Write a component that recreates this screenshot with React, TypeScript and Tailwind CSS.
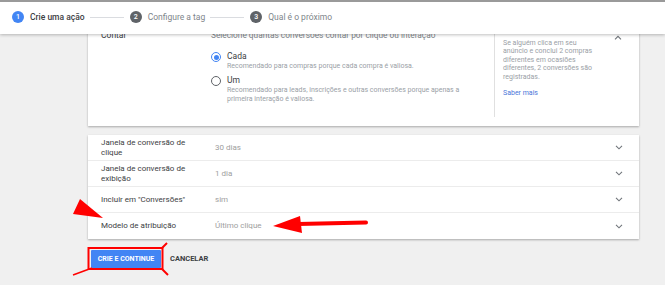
const Chevron = ({ up = false }: { up?: boolean }) => (
  <svg width="8" height="5" viewBox="0 0 8 5" className="text-[#70757a]">
    <path
      d={up ? "M1 4.3 L4 1.3 L7 4.3" : "M1 0.8 L4 3.8 L7 0.8"}
      fill="none"
      stroke="currentColor"
      strokeWidth="1.1"
    />
  </svg>
)

const Step = ({ n, label, active }: { n: number; label: string; active?: boolean }) => (
  <div className="flex items-center">
    <div
      className={`flex h-[12px] w-[12px] items-center justify-center rounded-full text-[7px] font-medium leading-none text-white ${
        active ? "bg-[#4285f4]" : "bg-[#5f6368]"
      }`}
    >
      {n}
    </div>
    <span className={`ml-[6px] text-[8.5px] ${active ? "font-medium text-[#3c4043]" : "text-[#80868b]"}`}>{label}</span>
  </div>
)

const rows = [
  { label: "Janela de conversão de clique", value: "30 dias" },
  { label: "Janela de conversão de exibição", value: "1 dia" },
  { label: 'Incluir em "Conversões"', value: "sim" },
  { label: "Modelo de atribuição", value: "Último clique" },
]

export default function App() {
  return (
    <div className="relative h-[285px] w-[665px] overflow-hidden bg-[#f0f0f0] font-['Roboto',sans-serif]">
      {/* stepper header sits over the scrolled content */}
      <div className="absolute left-0 right-0 top-0 z-10 flex h-[34px] items-center border-t-2 border-[#9a9a9a] bg-white pb-[2px] pl-[12px] shadow-[0_1px_3px_rgba(0,0,0,0.25)]">
        <Step n={1} label="Crie uma ação" active />
        <div className="ml-[5px] mr-[6px] h-px w-[34px] bg-[#dadce0]" />
        <Step n={2} label="Configure a tag" />
        <div className="ml-[5px] mr-[6px] h-px w-[34px] bg-[#dadce0]" />
        <Step n={3} label="Qual é o próximo" />
      </div>

      <div className="ml-[88px] w-[551px] pt-[22px]">
        {/* Contar card */}
        <div className="flex h-[104px] bg-white shadow-[0_1px_2px_rgba(0,0,0,0.3)]">
          <div className="w-[123px] pl-[13px] pt-[7px] text-[8.5px] leading-[12px] text-[#3c4043]">Contar</div>
          <div className="flex-1 pt-[7px]">
            <div className="text-[8.3px] leading-[12px] text-[#80868b]">
              Selecione quantas conversões contar por clique ou interação
            </div>
            <div className="mt-[10px] flex">
              <div className="mt-px flex h-[10px] w-[10px] items-center justify-center rounded-full border-[1.5px] border-[#4285f4]">
                <div className="h-[5px] w-[5px] rounded-full bg-[#4285f4]" />
              </div>
              <div className="ml-[6px]">
                <div className="text-[8.5px] leading-[11px] text-[#3c4043]">Cada</div>
                <div className="text-[7px] leading-[9px] text-[#9aa0a6]">
                  Recomendado para compras porque cada compra é valiosa.
                </div>
              </div>
            </div>
            <div className="mt-[4px] flex">
              <div className="mt-px h-[10px] w-[10px] rounded-full border-[1.5px] border-[#5f6368]" />
              <div className="ml-[6px]">
                <div className="text-[8.5px] leading-[11px] text-[#3c4043]">Um</div>
                <div className="w-[240px] text-[7px] leading-[9px] text-[#9aa0a6]">
                  Recomendado para leads, inscrições e outras conversões porque apenas a primeira interação é valiosa.
                </div>
              </div>
            </div>
          </div>
          <div className="mb-[9px] flex w-[145px] border-l border-[#e0e0e0] pl-[8px]">
            <div className="w-[92px] pt-[17px]">
              <div className="text-[7px] leading-[8.4px] text-[#9aa0a6]">
                Se alguém clica em seu anúncio e conclui 2 compras diferentes em ocasiões diferentes, 2 conversões são registradas.
              </div>
              <div className="mt-[8px] text-[7px] leading-[9px] text-[#4a76d9]">Saber mais</div>
            </div>
            <div className="ml-[19px] pt-[13px]">
              <Chevron up />
            </div>
          </div>
        </div>

        {/* settings list */}
        <div className="mt-[9px] bg-white shadow-[0_1px_2px_rgba(0,0,0,0.3)]">
          {rows.map((r, i) => (
            <div
              key={r.label}
              className={`flex h-[26px] items-center pl-[13px] pr-[16px] ${i < rows.length - 1 ? "border-b border-[#ececec]" : ""}`}
            >
              <div className="w-[114px]">
                <div className="w-[92px] text-[8px] leading-[9.5px] text-[#3c4043]">{r.label}</div>
              </div>
              <div className="flex-1 text-[8px] text-[#9e9e9e]">{r.value}</div>
              <Chevron />
            </div>
          ))}
        </div>

        <div className="mt-[11px] flex items-center">
          <button className="ml-[3px] h-[18px] w-[70px] rounded-[1px] bg-[#4285f4] text-[7px] font-bold text-white">
            CRIE E CONTINUE
          </button>
          <button className="ml-[9px] text-[7.5px] font-bold text-[#3c4043]">CANCELAR</button>
        </div>
      </div>

      {/* red annotations drawn on the screenshot */}
      <svg className="pointer-events-none absolute inset-0 z-20" width="665" height="285" viewBox="0 0 665 285">
        <polygon points="80,199 73,214 103,218" fill="#ff0000" />
        <polygon points="273,226 300,216 302,233" fill="#ff0000" />
        <line x1="298" y1="224" x2="366" y2="222.5" stroke="#ff0000" strokeWidth="4" strokeLinecap="round" />
        <rect x="88.5" y="248" width="74" height="21" fill="none" stroke="#ff0000" strokeWidth="2" />
        <line x1="73" y1="275" x2="92" y2="268" stroke="#ff0000" strokeWidth="1.5" />
        <line x1="162" y1="248" x2="167" y2="243" stroke="#ff0000" strokeWidth="2" />
        <line x1="162" y1="269" x2="168" y2="275" stroke="#ff0000" strokeWidth="2" />
      </svg>
    </div>
  )
}
